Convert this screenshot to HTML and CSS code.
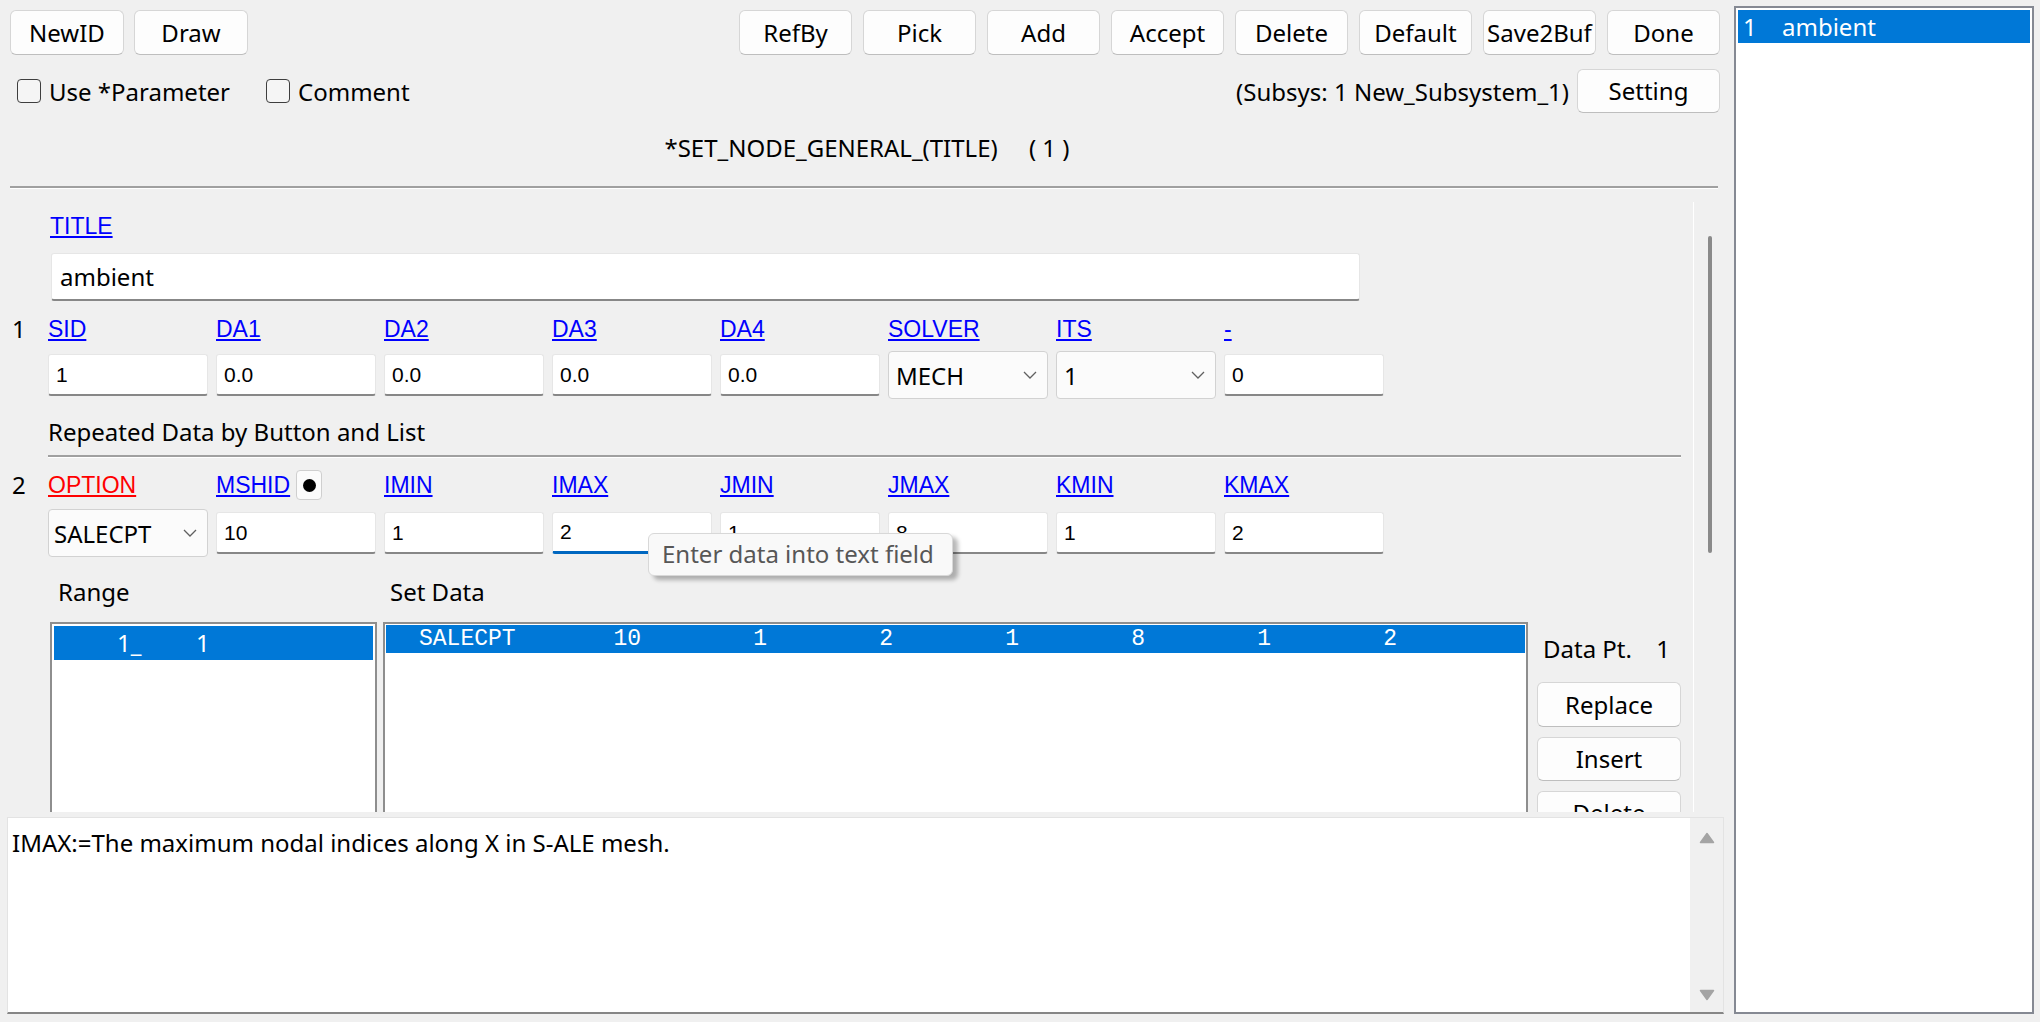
FILE: index.html
```html
<!DOCTYPE html>
<html>
<head>
<meta charset="utf-8">
<link rel="stylesheet" href="styles.css">
</head>
<body>
<div class="app">
  <div class="main">
    <div class="toolbar">
      <div class="btn-group">
        <div class="btn">NewID</div>
        <div class="btn">Draw</div>
      </div>
      <div class="btn-group right">
        <div class="btn">RefBy</div>
        <div class="btn">Pick</div>
        <div class="btn">Add</div>
        <div class="btn">Accept</div>
        <div class="btn">Delete</div>
        <div class="btn">Default</div>
        <div class="btn">Save2Buf</div>
        <div class="btn">Done</div>
      </div>
    </div>
    <div class="row2">
      <div class="checks">
        <div class="check first"><span class="box"></span><span>Use *Parameter</span></div>
        <div class="check"><span class="box"></span><span>Comment</span></div>
      </div>
      <div class="subsys">
        <span>(Subsys: 1 New_Subsystem_1)</span>
        <div class="btn setting">Setting</div>
      </div>
    </div>
    <div class="kw-title">*SET_NODE_GENERAL_(TITLE)&nbsp;&nbsp;&nbsp;&nbsp;&nbsp;( 1 )</div>
    <div class="hsep top-sep"></div>

    <div class="scroll-area">
      <div class="form">
        <div class="title-lbl"><span class="link">TITLE</span></div>
        <div class="field title-input">ambient</div>

        <div class="grid-row labels">
          <div class="rownum">1</div>
          <div class="cols">
            <span class="link">SID</span>
            <span class="link">DA1</span>
            <span class="link">DA2</span>
            <span class="link">DA3</span>
            <span class="link">DA4</span>
            <span class="link">SOLVER</span>
            <span class="link">ITS</span>
            <span class="link">-</span>
          </div>
        </div>
        <div class="grid-row inputs">
          <div class="rownum"></div>
          <div class="cols">
            <div class="field inp">1</div>
            <div class="field inp">0.0</div>
            <div class="field inp">0.0</div>
            <div class="field inp">0.0</div>
            <div class="field inp">0.0</div>
            <div class="combo"><span>MECH</span><svg width="14" height="8" viewBox="0 0 14 8"><polyline points="1,1 7,7 13,1" fill="none" stroke="#606060" stroke-width="1.3"/></svg></div>
            <div class="combo"><span>1</span><svg width="14" height="8" viewBox="0 0 14 8"><polyline points="1,1 7,7 13,1" fill="none" stroke="#606060" stroke-width="1.3"/></svg></div>
            <div class="field inp">0</div>
          </div>
        </div>

        <div class="section-lbl">Repeated Data by Button and List</div>
        <div class="hsep form-sep"></div>

        <div class="grid-row labels labels2">
          <div class="rownum">2</div>
          <div class="cols">
            <span class="link red">OPTION</span>
            <div class="lbl-with-btn"><span class="link">MSHID</span><div class="dotbtn"><span class="dot"></span></div></div>
            <span class="link">IMIN</span>
            <span class="link">IMAX</span>
            <span class="link">JMIN</span>
            <span class="link">JMAX</span>
            <span class="link">KMIN</span>
            <span class="link">KMAX</span>
          </div>
        </div>
        <div class="grid-row inputs inputs2">
          <div class="rownum"></div>
          <div class="cols">
            <div class="combo opt"><span>SALECPT</span><svg width="14" height="8" viewBox="0 0 14 8"><polyline points="1,1 7,7 13,1" fill="none" stroke="#606060" stroke-width="1.3"/></svg></div>
            <div class="field inp">10</div>
            <div class="field inp">1</div>
            <div class="field inp focus">2</div>
            <div class="field inp">1</div>
            <div class="field inp">8</div>
            <div class="field inp">1</div>
            <div class="field inp">2</div>
          </div>
        </div>

        <div class="sub-lbls">
          <span class="range-lbl">Range</span>
          <span>Set Data</span>
        </div>

        <div class="lists">
          <div class="list range">
            <div class="range-row"><span class="r1">1_</span><span>1</span></div>
          </div>
          <div class="list setdata">
            <div class="sd-row">
              <span class="sd-name">SALECPT</span>
              <span class="sd-val">10</span>
              <span class="sd-val">1</span>
              <span class="sd-val">2</span>
              <span class="sd-val">1</span>
              <span class="sd-val">8</span>
              <span class="sd-val">1</span>
              <span class="sd-val">2</span>
            </div>
          </div>
          <div class="dp">
            <div class="dp-line"><span>Data Pt.</span><span>1</span></div>
            <div class="btn dp-btn first-dp">Replace</div>
            <div class="btn dp-btn">Insert</div>
            <div class="btn dp-btn">Delete</div>
          </div>
        </div>
      </div>
      <div class="vscroll"><div class="thumb"></div></div>
    </div>

    <div class="desc">
      <div class="desc-box">
        <div class="desc-text">IMAX:=The maximum nodal indices along X in S-ALE mesh.</div>
        <div class="desc-scroll">
          <svg width="16" height="12" viewBox="0 0 16 12"><path d="M8 1.5 L14.5 10.5 L1.5 10.5 Z" fill="#a4a4a4" stroke="#a4a4a4" stroke-width="1.5" stroke-linejoin="round"/></svg>
          <svg width="16" height="12" viewBox="0 0 16 12"><path d="M8 10.5 L14.5 1.5 L1.5 1.5 Z" fill="#a4a4a4" stroke="#a4a4a4" stroke-width="1.5" stroke-linejoin="round"/></svg>
        </div>
      </div>
    </div>
  </div>

  <div class="side">
    <div class="side-row"><span class="n">1</span><span>ambient</span></div>
  </div>

  <div class="tooltip">Enter data into text field</div>
</div>
</body>
</html>
```

FILE: styles.css
```css
* { box-sizing: border-box; }
html, body { margin: 0; padding: 0; }
body {
  width: 2040px;
  height: 1022px;
  overflow: hidden;
  background: #f0f0f0;
  font-family: "Noto Sans", "Open Sans", sans-serif;
  font-size: 24px;
  color: #000;
}
.app { display: flex; height: 1022px; position: relative; }
.main { width: 1734px; display: flex; flex-direction: column; flex: none; }

/* toolbar */
.toolbar {
  display: flex;
  justify-content: space-between;
  margin-top: 10px;
  padding: 0 14px 0 10px;
  height: 45px;
  flex: none;
}
.btn-group { display: flex; gap: 10px; }
.btn-group.right { gap: 11px; }
.btn {
  width: 114px;
  height: 45px;
  display: flex;
  align-items: center;
  justify-content: center;
  background: #fdfdfd;
  border: 1px solid #d6d6d6;
  border-bottom-color: #bebebe;
  border-radius: 6px;
  line-height: 1;
  flex: none;
}
.btn-group.right .btn { width: 113px; }

.row2 {
  display: flex;
  justify-content: space-between;
  align-items: center;
  margin-top: 14px;
  height: 44px;
  padding: 0 14px 0 17px;
  flex: none;
}
.checks { display: flex; align-items: center; }
.check { display: flex; align-items: center; gap: 8px; }
.check.first { width: 249px; }
.box {
  width: 24px;
  height: 24px;
  border: 1.5px solid #3e3e3e;
  border-radius: 4px;
  background: #f5f5f5;
}
.subsys { display: flex; align-items: center; gap: 8px; }
.btn.setting { width: 143px; height: 44px; }

.kw-title { height: 70px; line-height: 70px; text-align: center; flex: none; }

.hsep {
  height: 3px;
  background: #a0a0a0;
  border-bottom: 1px solid #ffffff;
  flex: none;
}
.top-sep { margin: 3px 16px 0 10px; }

/* scroll area */
.scroll-area { height: 623px; display: flex; overflow: hidden; flex: none; }
.form {
  width: 1694px;
  margin-top: 13px;
  border-right: 1px solid #ffffff;
  display: flex;
  flex-direction: column;
  overflow: hidden;
  flex: none;
}
.vscroll { flex: 1; }
.thumb {
  margin: 47px 0 0 14px;
  width: 4px;
  height: 317px;
  background: #8a8a8a;
  border-radius: 2px;
}

.link {
  font-family: "Liberation Sans", Arial, sans-serif;
  font-size: 23px;
  color: #0000ff;
  text-decoration: underline;
  text-decoration-thickness: 2px;
  text-underline-offset: 2px;
}
.link.red { color: #ff0000; }

.title-lbl { margin: 7px 0 0 50px; height: 32px; line-height: 32px; flex: none; }

.field {
  background: #fff;
  border: 1px solid #e6e6e6;
  border-bottom: 2px solid #878787;
  border-radius: 3px;
  display: flex;
  align-items: center;
}
.title-input {
  margin: 12px 0 0 51px;
  width: 1309px;
  height: 48px;
  padding-left: 8px;
  flex: none;
}

.grid-row { display: flex; align-items: center; flex: none; }
.rownum { width: 48px; padding-left: 12px; flex: none; }
.cols {
  display: grid;
  grid-template-columns: repeat(8, 160px);
  column-gap: 8px;
  align-items: center;
}
.labels { height: 32px; margin-top: 12px; line-height: 32px; }
.inputs { height: 48px; margin-top: 6px; }
.labels2 { margin-top: 11px; }
.inputs2 { margin-top: 8px; }

.inp {
  height: 42px;
  padding-left: 7px;
  font-family: "Liberation Sans", Arial, sans-serif;
  font-size: 21px;
}
.inp.focus { border-bottom: 3px solid #0067c0; }

.combo {
  height: 48px;
  background: #fbfbfb;
  border: 1px solid #d2d2d2;
  border-radius: 4px;
  display: flex;
  align-items: center;
  justify-content: space-between;
  padding: 0 10px 0 7px;
}
.combo.opt { padding-left: 5px; }

.lbl-with-btn { display: flex; align-items: center; gap: 6px; }
.dotbtn {
  width: 26px;
  height: 30px;
  border: 1px solid #cfcfcf;
  border-radius: 4px;
  background: #fbfbfb;
  display: flex;
  align-items: center;
  justify-content: center;
}
.dot { width: 13px; height: 13px; border-radius: 50%; background: #000; }

.section-lbl { margin: 17px 0 0 48px; height: 32px; line-height: 32px; flex: none; }
.form-sep { margin: 7px 0 0 48px; width: 1633px; }

.sub-lbls { display: flex; margin-top: 19px; height: 32px; line-height: 32px; flex: none; }
.range-lbl { margin-left: 58px; width: 332px; }

.lists { display: flex; margin: 14px 0 0 50px; height: 420px; flex: none; }
.list { border: 2px solid #8e8e8e; background: #fff; padding: 2px; }
.range { width: 327px; }
.setdata { width: 1145px; margin-left: 6px; padding: 1px; }

.range-row {
  height: 34px;
  line-height: 34px;
  background: #0078d7;
  color: #fff;
  display: flex;
}
.r1 { margin-left: 63px; width: 79px; }

.sd-row {
  height: 28px;
  line-height: 28px;
  background: #0078d7;
  color: #fff;
  display: flex;
  font-family: "Liberation Mono", "Courier New", monospace;
  font-size: 23px;
}
.sd-name { width: 129px; padding-left: 33px; }
.sd-val { width: 126px; text-align: right; }

.dp { width: 144px; margin-left: 9px; display: flex; flex-direction: column; }
.dp-line {
  margin-top: 11px;
  height: 32px;
  line-height: 32px;
  display: flex;
  justify-content: space-between;
  padding: 0 11px 0 6px;
}
.dp-btn { width: 144px; height: 44px; margin-top: 10px; }
.dp-btn.first-dp { margin-top: 17px; height: 45px; }

/* description */
.desc {
  margin-left: 7px;
  width: 1717px;
  height: 202px;
  padding-top: 5px;
  background: #f0f0f0;
  flex: none;
}
.desc-box {
  height: 197px;
  background: #fff;
  border: 1px solid #e3e3e3;
  border-bottom: 2px solid #868686;
  display: flex;
}
.desc-text { flex: 1; padding: 9px 0 0 4px; line-height: 32px; }
.desc-scroll {
  width: 33px;
  background: #f0f0f0;
  display: flex;
  flex-direction: column;
  justify-content: space-between;
  align-items: center;
  padding: 14px 0 11px;
}

/* side list */
.side {
  margin-top: 6px;
  width: 300px;
  height: 1008px;
  border: 2px solid #858993;
  background: #fff;
  padding: 2px;
  flex: none;
}
.side-row {
  height: 33px;
  line-height: 33px;
  background: #0078d7;
  color: #fff;
  display: flex;
}
.side-row .n { margin-left: 5px; width: 39px; }

/* tooltip */
.tooltip {
  position: absolute;
  left: 648px;
  top: 533px;
  width: 305px;
  height: 43px;
  background: #f9f9f9;
  border: 1px solid #d8d8d8;
  border-radius: 6px;
  color: #575757;
  padding-left: 13px;
  line-height: 40px;
  box-shadow: 5px 4px 4px rgba(0, 0, 0, 0.28);
}
```
